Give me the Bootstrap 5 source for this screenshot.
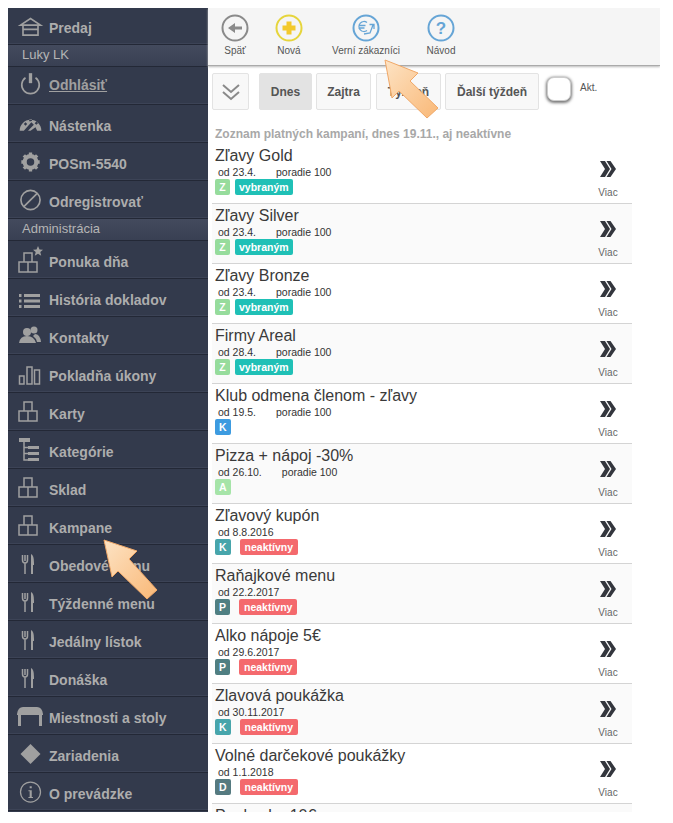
<!DOCTYPE html>
<html lang="sk">
<head>
<meta charset="UTF-8">
<meta name="viewport" content="width=device-width, initial-scale=1.0">
<title>Kampane</title>
<link href="https://cdn.jsdelivr.net/npm/bootstrap@5.3.0/dist/css/bootstrap.min.css" rel="stylesheet">
<style>
body { margin: 0; background: #fff; font-family: "Liberation Sans", Arial, sans-serif; }
.app-frame { margin: 8px 0 0 8px; width: 652px; height: 804px; overflow: hidden; }
.side-menu { width: 200px; flex: none; background: #333a4c; }
.side-item { height: 38px; padding: 5px 0 0 9px; color: #adadad; font-size: 14px; font-weight: 700; border-bottom: 1px solid #232836; box-shadow: inset 0 -1px 0 #3c4356; text-decoration: none; }
.side-item svg { width: 32px; height: 30px; flex: none; margin-bottom: 5px; }
.side-item.first-item { height: 37px; }
.side-item.logout { padding-top: 0; color: #a0a0a0; text-decoration: underline; }
.side-item.logout svg { margin-bottom: 3px; }
.side-head { height: 22px; line-height: 20px; padding-left: 14px; color: #b5b5b5; font-size: 13px; background: linear-gradient(#434a5d, #394053); border-bottom: 1px solid #232836; }
.ico-line { fill: none; stroke: #a0a0a0; stroke-width: 2; }
.ico-thin { fill: none; stroke: #a0a0a0; stroke-width: 1.500; }
.ico-fill { fill: #a0a0a0; }
.main-pane { width: 452px; flex: none; }
.tool-bar { height: 58px; padding-top: 6px; background: #f5f5f5; border-bottom: 1px solid #aaa; box-shadow: 0 1px 2px #bbb; }
.tool-item { flex: none; color: #555; font-size: 10px; line-height: 11px; text-align: center; }
.tool-item svg { display: block; width: 28px; height: 28px; margin: 0 auto 3px; }
.tool-back { width: 54px; }
.tool-new { width: 54px; }
.tool-loyal { width: 100px; }
.tool-help { width: 50px; }
.filter-row { height: 37px; margin: 7px 0 0 4px; }
.day-btn { height: 37px; padding: 0; color: #555; font-size: 12px; font-weight: 700; background: #f8f8f8; border: 1px solid #e3e3e3; border-radius: 2px; }
.day-btn.day-on { background: #e3e3e3; }
.day-toggle { width: 37px; margin-right: 10px; }
.day-today { width: 53px; margin-right: 4px; }
.day-tomorrow { width: 55px; margin-right: 5px; }
.day-week { width: 65px; margin-right: 4px; }
.day-next { width: 94px; margin-right: 8px; }
.check-box { width: 24px; height: 24px; margin-top: 4px; background: #fff; border: 1px solid #ccc; border-radius: 7px; box-shadow: 0 1px 3px 1px #777; }
.check-label { margin: 7px 0 0 9px; color: #555; font-size: 10px; }
.list-title { margin: 16px 0 0 7px; height: 18px; color: #a8a8a8; font-size: 12px; font-weight: 700; line-height: 16px; }
.camp-list { width: 420px; margin-left: 4px; }
.camp-row { height: 60px; padding: 2px 0 0 3px; border-bottom: 1px solid #d4d4d4; background: #fff; }
.camp-row:nth-child(even) { background: #fafafa; }
.camp-name { color: #3a3a3a; font-size: 16px; line-height: 19px; }
.camp-meta { height: 13px; margin: 1px 0 0 3px; color: #333; font-size: 10.500px; line-height: 12px; }
.camp-meta span + span { margin-left: 20px; }
.tag-box { height: 16px; padding: 0 4px; color: #fff; font-size: 10.500px; font-weight: 700; line-height: 16px; border-radius: 2px; margin-right: 5px; min-width: 15px; text-align: center; }
.tag-z { background: #96dc9c; }
.tag-a { background: #a6e4a8; }
.tag-k { background: #47a5ab; }
.tag-blue { background: #3d9be0; }
.tag-p { background: #4f7f82; }
.tag-d { background: #557a80; }
.tag-sel { background: #1fc0b6; }
.tag-off { background: #f4696d; margin-left: 4px; padding: 0 5px; }
.more-box { width: 36px; margin-right: 6px; padding-top: 15px; color: #666; font-size: 10px; text-align: center; line-height: 11px; }
.more-box svg { display: block; width: 16px; height: 16px; margin: 0 auto 10px; }
.hint-arrow { position: absolute; z-index: 5; left: 0; top: 0; width: 673px; height: 823px; pointer-events: none; }
</style>
</head>
<body>

<svg width="0" height="0" class="position-absolute">
  <defs>
    <linearGradient id="arrowFill" x1="0" y1="0" x2="1" y2="1">
      <stop offset="0" stop-color="#fde3c4"/>
      <stop offset="1" stop-color="#f9b877"/>
    </linearGradient>
    <symbol id="i-boxes" viewBox="0 0 32 30">
      <path class="ico-thin" d="M7 5h8v9H7zM2 14h9v10H2zM11 14h9v10h-9z"/>
    </symbol>
    <symbol id="i-food" viewBox="0 0 32 30">
      <path class="ico-thin" d="M8 14v11M5.500 6v5q0 3 2.500 3t2.500-3V6M8 6v6"/>
      <path class="ico-fill" d="M14 5q3 1 3 9v2h-1v9h-2z"/>
    </symbol>
    <symbol id="i-more" viewBox="0 0 16 16">
      <path d="M0 0h5l5 8-5 8H0l5-8zM6.500 0h4l5.500 8-5.500 8h-4l5-8z" fill="#33363d"/>
    </symbol>
  </defs>
</svg>

<div class="app-frame d-flex">
  <nav class="side-menu d-flex flex-column">
    <a class="side-item first-item d-flex align-items-center" href="#">
      <svg viewBox="0 -3 38 36"><path class="ico-line" d="M4 14 16 6l12 8zM7 14v12h18V14M7 19h18"/></svg>Predaj
    </a>
    <div class="side-head">Luky LK</div>
    <a class="side-item logout d-flex align-items-center" href="#">
      <svg viewBox="0 -3 38 36"><path class="ico-line" d="M10 7.500a10.500 10.500 0 1 0 12 0"/><path d="M16 2v12" stroke="#a0a0a0" stroke-width="4"/></svg>Odhlásiť
    </a>
    <a class="side-item d-flex align-items-center" href="#">
      <svg viewBox="0 -3 38 36"><path class="ico-fill" d="M3 23a13 13 0 0 1 26 0h-5l-2-4-6 4h-3l7-7-3-3-9 10zM8 15l2 2 2-2-2-2zM14 10l1 2 3-1-1-2zM23 12l-2 2 2 2 2-2z"/></svg>Nástenka
    </a>
    <a class="side-item d-flex align-items-center" href="#">
      <svg viewBox="0 -3 38 36"><circle cx="16" cy="15" r="7" fill="none" stroke="#a0a0a0" stroke-width="5"/><path d="M16 3.500v4M16 22.500v4M5 15h4M23 15h4M8 7l3 3M21 20l3 3M8 23l3-3M21 10l3-3" stroke="#a0a0a0" stroke-width="4"/></svg>POSm-5540
    </a>
    <a class="side-item d-flex align-items-center" href="#">
      <svg viewBox="0 -3 38 36"><circle class="ico-line" cx="16" cy="15" r="11.500"/><path class="ico-line" d="M8 23 24 7"/></svg>Odregistrovať
    </a>
    <div class="side-head">Administrácia</div>
    <a class="side-item d-flex align-items-center" href="#">
      <svg viewBox="0 0 32 30"><path class="ico-thin" d="M7 8h8v9H7zM2 17h9v10H2zM11 17h9v10h-9z"/><path class="ico-fill" d="m21 1 1.500 3.500 3.500.3-2.700 2.300.9 3.600-3.200-2-3.200 2 .9-3.600L16 4.800l3.500-.3z"/></svg>Ponuka dňa
    </a>
    <a class="side-item d-flex align-items-center" href="#">
      <svg viewBox="0 0 32 30"><path d="M2 11h2.500v3H2zM2 16.500h2.500v3H2zM2 22h2.500v3H2zM7 11h16v3H7zM7 16.500h16v3H7zM7 22h16v3H7z" class="ico-fill"/></svg>História dokladov
    </a>
    <a class="side-item d-flex align-items-center" href="#">
      <svg viewBox="0 0 32 30"><circle class="ico-fill" cx="10" cy="11" r="4"/><circle class="ico-fill" cx="17" cy="9" r="3.500"/><path class="ico-fill" d="M2 22q1-7 8-7t9 7zM18 13q5 0 6 8h-4q-1-4-4-6z"/></svg>Kontakty
    </a>
    <a class="side-item d-flex align-items-center" href="#">
      <svg viewBox="0 0 32 30"><path class="ico-thin" d="M2.500 17h4.500v8H2.500zM10 8h5v17h-5zM17.500 11h5v14h-5z"/></svg>Pokladňa úkony
    </a>
    <a class="side-item d-flex align-items-center" href="#"><svg><use href="#i-boxes"/></svg>Karty</a>
    <a class="side-item d-flex align-items-center" href="#">
      <svg viewBox="0 0 32 30"><path class="ico-fill" d="M2 3h11v4H2zM11 11h11v3H11zM11 17h11v3H11zM11 23h11v3H11z"/><path class="ico-thin" d="M7 7v18h4M7 12.500h4M7 18.500h4"/></svg>Kategórie
    </a>
    <a class="side-item d-flex align-items-center" href="#"><svg><use href="#i-boxes"/></svg>Sklad</a>
    <a class="side-item d-flex align-items-center" href="#"><svg><use href="#i-boxes"/></svg>Kampane</a>
    <a class="side-item d-flex align-items-center" href="#"><svg><use href="#i-food"/></svg>Obedové menu</a>
    <a class="side-item d-flex align-items-center" href="#"><svg><use href="#i-food"/></svg>Týždenné menu</a>
    <a class="side-item d-flex align-items-center" href="#"><svg><use href="#i-food"/></svg>Jedálny lístok</a>
    <a class="side-item d-flex align-items-center" href="#"><svg><use href="#i-food"/></svg>Donáška</a>
    <a class="side-item d-flex align-items-center" href="#">
      <svg viewBox="0 0 32 30"><path class="ico-fill" d="M0 13q1-7 6-7h14q5 0 6 7v1h-1v11h-3V14H4v11H1V14H0z"/></svg>Miestnosti a stoly
    </a>
    <a class="side-item d-flex align-items-center" href="#">
      <svg viewBox="0 -3 38 36"><path class="ico-fill" d="m16 3 12 12-12 12L4 15z"/></svg>Zariadenia
    </a>
    <a class="side-item d-flex align-items-center" href="#">
      <svg viewBox="0 -3 38 36"><circle class="ico-thin" cx="16" cy="15" r="12"/><path class="ico-fill" d="M15 8h2.500v2.500H15zM13.500 13h4v8H19v1.200h-5.500V21h1.500v-6.800h-1.500z"/></svg>O prevádzke
    </a>
  </nav>

  <main class="main-pane">
    <div class="tool-bar d-flex">
      <div class="tool-item tool-back">
        <svg viewBox="0 0 28 28"><circle cx="14" cy="14" r="12.500" fill="none" stroke="#8a8a8a" stroke-width="2"/><path d="M21 12.500h-7V9l-7 5 7 5v-3.500h7z" fill="#8a8a8a"/></svg>Späť
      </div>
      <div class="tool-item tool-new">
        <svg viewBox="0 0 28 28"><circle cx="14" cy="14" r="12.500" fill="none" stroke="#e6d53c" stroke-width="2"/><path d="M11.500 7.500h5v4h4v5h-4v4h-5v-4h-4v-5h4z" fill="#f3c92c"/></svg>Nová
      </div>
      <div class="tool-item tool-loyal">
        <svg viewBox="0 0 28 28"><circle cx="14" cy="14" r="12.500" fill="none" stroke="#66a5d6" stroke-width="2"/><path d="M15 8.500a5 5 0 1 0 0 8M6.500 11.500h7M6.500 14h6M12 20l6-1 3-8M17.500 10.500H22V15" fill="none" stroke="#66a5d6" stroke-width="1.300"/></svg>Verní zákazníci
      </div>
      <div class="tool-item tool-help">
        <svg viewBox="0 0 28 28"><circle cx="14" cy="14" r="12.500" fill="none" stroke="#66a5d6" stroke-width="2"/><text x="14" y="20" text-anchor="middle" font-size="17" font-weight="700" font-family="Liberation Sans" fill="#66a5d6">?</text></svg>Návod
      </div>
    </div>

    <div class="filter-row d-flex">
      <button class="btn day-btn day-toggle" type="button" aria-label="Rozbaliť">
        <svg width="20" height="20" viewBox="0 0 20 20"><path d="m2 3 8 7 8-7M2 10l8 7 8-7" fill="none" stroke="#8a8a8a" stroke-width="2"/></svg>
      </button>
      <button class="btn day-btn day-today day-on" type="button">Dnes</button>
      <button class="btn day-btn day-tomorrow" type="button">Zajtra</button>
      <button class="btn day-btn day-week" type="button">Týždeň</button>
      <button class="btn day-btn day-next" type="button">Ďalší týždeň</button>
      <div class="check-box"></div>
      <div class="check-label">Akt.</div>
    </div>

    <div class="list-title">Zoznam platných kampaní, dnes 19.11., aj neaktívne</div>

    <div class="camp-list">
      <div class="camp-row d-flex justify-content-between">
        <div><div class="camp-name">Zľavy Gold</div><div class="camp-meta"><span>od 23.4.</span><span>poradie 100</span></div><div class="d-flex"><span class="tag-box tag-z">Z</span><span class="tag-box tag-sel">vybraným</span></div></div>
        <div class="more-box"><svg><use href="#i-more"/></svg>Viac</div>
      </div>
      <div class="camp-row d-flex justify-content-between">
        <div><div class="camp-name">Zľavy Silver</div><div class="camp-meta"><span>od 23.4.</span><span>poradie 100</span></div><div class="d-flex"><span class="tag-box tag-z">Z</span><span class="tag-box tag-sel">vybraným</span></div></div>
        <div class="more-box"><svg><use href="#i-more"/></svg>Viac</div>
      </div>
      <div class="camp-row d-flex justify-content-between">
        <div><div class="camp-name">Zľavy Bronze</div><div class="camp-meta"><span>od 23.4.</span><span>poradie 100</span></div><div class="d-flex"><span class="tag-box tag-z">Z</span><span class="tag-box tag-sel">vybraným</span></div></div>
        <div class="more-box"><svg><use href="#i-more"/></svg>Viac</div>
      </div>
      <div class="camp-row d-flex justify-content-between">
        <div><div class="camp-name">Firmy Areal</div><div class="camp-meta"><span>od 28.4.</span><span>poradie 100</span></div><div class="d-flex"><span class="tag-box tag-z">Z</span><span class="tag-box tag-sel">vybraným</span></div></div>
        <div class="more-box"><svg><use href="#i-more"/></svg>Viac</div>
      </div>
      <div class="camp-row d-flex justify-content-between">
        <div><div class="camp-name">Klub odmena členom - zľavy</div><div class="camp-meta"><span>od 19.5.</span><span>poradie 100</span></div><div class="d-flex"><span class="tag-box tag-blue">K</span></div></div>
        <div class="more-box"><svg><use href="#i-more"/></svg>Viac</div>
      </div>
      <div class="camp-row d-flex justify-content-between">
        <div><div class="camp-name">Pizza + nápoj -30%</div><div class="camp-meta"><span>od 26.10.</span><span>poradie 100</span></div><div class="d-flex"><span class="tag-box tag-a">A</span></div></div>
        <div class="more-box"><svg><use href="#i-more"/></svg>Viac</div>
      </div>
      <div class="camp-row d-flex justify-content-between">
        <div><div class="camp-name">Zľavový kupón</div><div class="camp-meta"><span>od 8.8.2016</span></div><div class="d-flex"><span class="tag-box tag-k">K</span><span class="tag-box tag-off">neaktívny</span></div></div>
        <div class="more-box"><svg><use href="#i-more"/></svg>Viac</div>
      </div>
      <div class="camp-row d-flex justify-content-between">
        <div><div class="camp-name">Raňajkové menu</div><div class="camp-meta"><span>od 22.2.2017</span></div><div class="d-flex"><span class="tag-box tag-p">P</span><span class="tag-box tag-off">neaktívny</span></div></div>
        <div class="more-box"><svg><use href="#i-more"/></svg>Viac</div>
      </div>
      <div class="camp-row d-flex justify-content-between">
        <div><div class="camp-name">Alko nápoje 5€</div><div class="camp-meta"><span>od 29.6.2017</span></div><div class="d-flex"><span class="tag-box tag-p">P</span><span class="tag-box tag-off">neaktívny</span></div></div>
        <div class="more-box"><svg><use href="#i-more"/></svg>Viac</div>
      </div>
      <div class="camp-row d-flex justify-content-between">
        <div><div class="camp-name">Zlavová poukážka</div><div class="camp-meta"><span>od 30.11.2017</span></div><div class="d-flex"><span class="tag-box tag-k">K</span><span class="tag-box tag-off">neaktívny</span></div></div>
        <div class="more-box"><svg><use href="#i-more"/></svg>Viac</div>
      </div>
      <div class="camp-row d-flex justify-content-between">
        <div><div class="camp-name">Volné darčekové poukážky</div><div class="camp-meta"><span>od 1.1.2018</span></div><div class="d-flex"><span class="tag-box tag-d">D</span><span class="tag-box tag-off">neaktívny</span></div></div>
        <div class="more-box"><svg><use href="#i-more"/></svg>Viac</div>
      </div>
      <div class="camp-row">
        <div class="camp-name">Poukazka 10€</div>
      </div>
    </div>
  </main>
</div>

<!-- callout arrows lying over the page -->
<svg class="hint-arrow" viewBox="0 0 673 823">
  <path d="M385 60 418 73 410 81 438 108 427 118 399 91 392 98z" fill="url(#arrowFill)" stroke="#f0a868" stroke-width="1"/>
  <path d="M104 540 137 551 129 559 157 590 147 599 118 571 112 577z" fill="url(#arrowFill)" stroke="#f0a868" stroke-width="1"/>
</svg>

<script src="https://cdn.jsdelivr.net/npm/bootstrap@5.3.0/dist/js/bootstrap.bundle.min.js"></script>
</body>
</html>
